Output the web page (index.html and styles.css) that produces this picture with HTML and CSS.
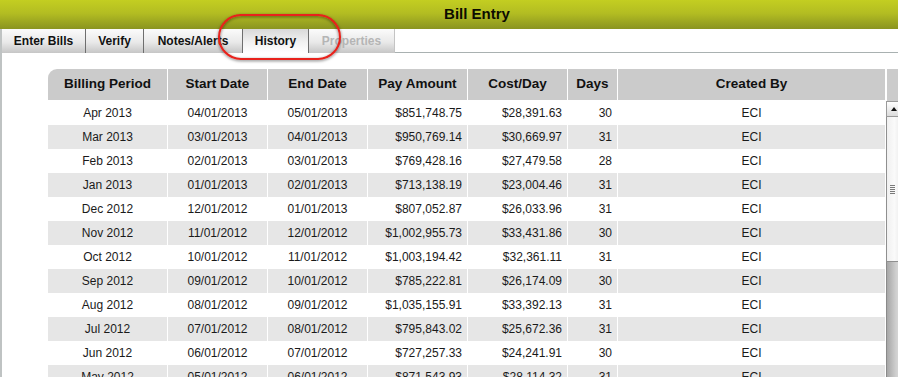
FILE: index.html
```html
<!DOCTYPE html>
<html lang="en">
<head>
    <meta charset="UTF-8">
    <title>Bill Entry</title>
    <link rel="stylesheet" href="styles.css">
</head>
<body>
    <div class="titlebar">Bill Entry</div>

    <div class="main">
        <div class="tabs">
            <div class="tab">Enter Bills</div>
            <div class="tab">Verify</div>
            <div class="tab">Notes/Alerts</div>
            <div class="tab active">History</div>
            <div class="tab disabled">Properties</div>
            <div class="tab-rest"></div>
        </div>

        <div class="content">
            <div class="grid">
                <div class="grid-body">
                    <div class="row head">
                        <div class="cell">Billing Period</div>
                        <div class="cell">Start Date</div>
                        <div class="cell">End Date</div>
                        <div class="cell">Pay Amount</div>
                        <div class="cell">Cost/Day</div>
                        <div class="cell">Days</div>
                        <div class="cell">Created By</div>
                    </div>
                    <div id="rows"></div>
                </div>
                <div class="scrollbar">
                    <div class="sb-cap"></div>
                    <div class="sb-up"><span class="sb-arrow"></span></div>
                    <div class="sb-thumb"><span class="sb-grip"></span></div>
                    <div class="sb-track"></div>
                </div>
            </div>
        </div>
    </div>

    <!-- annotation drawn over the History tab -->
    <svg class="callout" width="140" height="62" viewBox="0 0 140 62">
        <defs>
            <filter id="shade" x="-20%" y="-30%" width="140%" height="160%">
                <feDropShadow dx="0" dy="1" stdDeviation="1.6" flood-color="#000" flood-opacity="0.55"/>
            </filter>
        </defs>
        <rect x="9" y="8" width="121" height="44" rx="22" ry="22" fill="none" stroke="#e8201a" stroke-width="2" filter="url(#shade)"/>
    </svg>

    <script>
        const bills = [
            ['Apr 2013', '04/01/2013', '05/01/2013', '$851,748.75', '$28,391.63', '30', 'ECI'],
            ['Mar 2013', '03/01/2013', '04/01/2013', '$950,769.14', '$30,669.97', '31', 'ECI'],
            ['Feb 2013', '02/01/2013', '03/01/2013', '$769,428.16', '$27,479.58', '28', 'ECI'],
            ['Jan 2013', '01/01/2013', '02/01/2013', '$713,138.19', '$23,004.46', '31', 'ECI'],
            ['Dec 2012', '12/01/2012', '01/01/2013', '$807,052.87', '$26,033.96', '31', 'ECI'],
            ['Nov 2012', '11/01/2012', '12/01/2012', '$1,002,955.73', '$33,431.86', '30', 'ECI'],
            ['Oct 2012', '10/01/2012', '11/01/2012', '$1,003,194.42', '$32,361.11', '31', 'ECI'],
            ['Sep 2012', '09/01/2012', '10/01/2012', '$785,222.81', '$26,174.09', '30', 'ECI'],
            ['Aug 2012', '08/01/2012', '09/01/2012', '$1,035,155.91', '$33,392.13', '31', 'ECI'],
            ['Jul 2012', '07/01/2012', '08/01/2012', '$795,843.02', '$25,672.36', '31', 'ECI'],
            ['Jun 2012', '06/01/2012', '07/01/2012', '$727,257.33', '$24,241.91', '30', 'ECI'],
            ['May 2012', '05/01/2012', '06/01/2012', '$871,543.93', '$28,114.32', '31', 'ECI']
        ];

        // fill rows
        const rows = document.getElementById('rows');
        bills.forEach(function (b, i)
        {
            const row = document.createElement('div');
            row.className = 'row' + (i % 2 ? ' alt' : '');
            b.forEach(function (v, c)
            {
                const cell = document.createElement('div');
                cell.className = 'cell' + (c >= 3 && c <= 5 ? ' num' : '');
                cell.textContent = v;
                row.appendChild(cell);
            });
            rows.appendChild(row);
        });
    </script>
</body>
</html>
```

FILE: styles.css
```css
html, body {
    margin: 0;
    padding: 0;
}

body {
    width: 898px;
    height: 377px;
    overflow: hidden;
    position: relative;
    background-color: #fff;
    font-family: "Liberation Sans", Arial, Helvetica, sans-serif;
    color: #1a1a1a;
}

.titlebar {
    height: 29px;
    line-height: 28px;
    text-align: center;
    font-size: 15px;
    font-weight: bold;
    color: #0c0c00;
    padding-left: 56px;
    background: linear-gradient(#c3ce21, #b3bd22 45%, #8a9420);
}

.main {
    border-left: 2px solid #bfc3c3;
    height: 348px;
}

/* tabs */
.tabs {
    display: flex;
    height: 24px;
}

.tab {
    line-height: 24px;
    font-size: 12px;
    font-weight: bold;
    color: #111;
    text-align: center;
    white-space: nowrap;
    background: linear-gradient(#fbfbfb, #e9e9e9 55%, #c6c6c6);
    border-right: 1px solid #6e6e6e;
    box-sizing: border-box;
}

.tab:nth-child(1) { width: 84px; }
.tab:nth-child(2) { width: 58px; }
.tab:nth-child(3) { width: 99px; }
.tab:nth-child(4) { width: 66px; }
.tab:nth-child(5) { width: 86px; border-right: 1px solid #c4c4c4; }

.tab.active {
    background: linear-gradient(#d9d9d9, #f1f1f1 55%, #ffffff);
}

.tab.disabled {
    color: #b5b5b5;
}

.tab-rest {
    flex: 1;
    border-bottom: 1px solid #a9b1b1;
}

/* history grid */
.content {
    padding: 16px 0 0 46px;
}

.grid {
    display: flex;
    width: 860px;
}

.grid-body {
    width: 837px;
    margin-right: 1px;
}

.row {
    display: grid;
    grid-template-columns: 119px 99px 99px 99px 99px 49px 1fr;
    column-gap: 1px;
    height: 24px;
    line-height: 24px;
    font-size: 12px;
}

.row.head {
    height: 31px;
    line-height: 30px;
    font-size: 13.5px;
    font-weight: bold;
    color: #111;
    margin-bottom: 1px;
}

.row.head .cell {
    background-color: #cbcbcb;
}

.row.head .cell:first-child {
    border-top-left-radius: 9px;
}

.cell {
    text-align: center;
    white-space: nowrap;
    overflow: hidden;
    background-color: #fff;
}

.cell.num {
    text-align: right;
    padding-right: 5px;
}

.row.head .cell {
    text-align: center;
    padding-right: 0;
}

.row.alt .cell {
    background-color: #e6e6e6;
}

/* scrollbar */
.scrollbar {
    width: 16px;
    display: flex;
    flex-direction: column;
}

.sb-cap {
    height: 32px;
    background-color: #cbcbcb;
    border-left: 1px solid #fff;
}

.sb-up {
    height: 14px;
    border: 1px solid #9a9a9a;
    border-right: none;
    background: linear-gradient(#ffffff, #dcdcdc);
    position: relative;
}

.sb-arrow {
    position: absolute;
    left: 4px;
    top: 5px;
    border-left: 3px solid transparent;
    border-right: 3px solid transparent;
    border-bottom: 4px solid #111;
}

.sb-thumb {
    height: 144px;
    border-left: 1px solid #8f8f8f;
    border-bottom: 1px solid #8f8f8f;
    background: linear-gradient(to right, #f0f0f0, #fafafa 50%, #e8e8e8);
    position: relative;
}

.sb-grip {
    position: absolute;
    left: 3px;
    top: 68px;
    width: 5px;
    height: 9px;
    background: repeating-linear-gradient(#7a7a7a 0, #7a7a7a 1px, transparent 1px, transparent 2px);
}

.sb-track {
    flex: 1;
    border-left: 1px solid #8a8a8a;
    background: linear-gradient(to right, #a6a6a6, #cfcfcf 60%, #dedede);
}

/* red annotation ring */
.callout {
    position: absolute;
    left: 210px;
    top: 7px;
}
```
